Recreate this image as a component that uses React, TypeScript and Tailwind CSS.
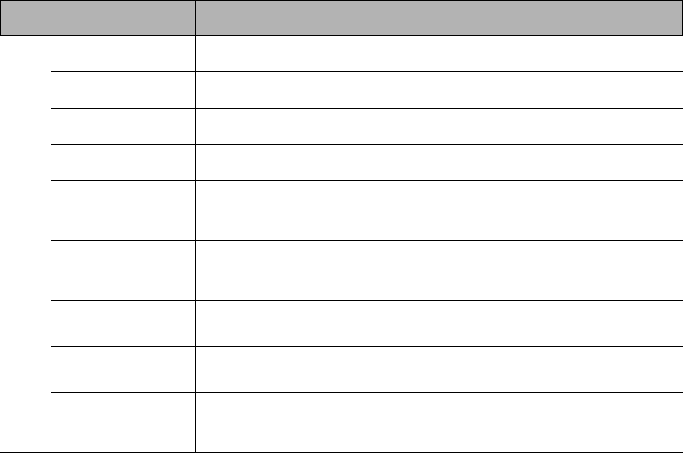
const rows = [
  { h: "h-[35px]", line: false },
  { h: "h-[37px]", line: true },
  { h: "h-[36px]", line: true },
  { h: "h-[36px]", line: true },
  { h: "h-[60px]", line: true },
  { h: "h-[60px]", line: true },
  { h: "h-[46px]", line: true },
  { h: "h-[46px]", line: true },
  { h: "h-[60px]", line: true },
];

export default function App() {
  return (
    <div className="w-[683px] h-[453px] bg-white font-['Liberation_Sans',sans-serif]">
      {/* header */}
      <div className="flex h-[36px] border border-black bg-[#b3b3b3]">
        <div className="w-[195px] border-r border-black" />
        <div className="flex-1" />
      </div>

      {rows.map((row, i) => (
        <div key={i} className={`flex ${row.h}`}>
          <div className="w-[195px] pl-[51px]">
            <div className={row.line ? "h-full border-t border-black" : "h-full"} />
          </div>
          <div
            className={
              row.line
                ? "flex-1 border-l border-t border-black"
                : "flex-1 border-l border-black"
            }
          />
        </div>
      ))}

      <div className="h-px bg-black" />
    </div>
  );
}
